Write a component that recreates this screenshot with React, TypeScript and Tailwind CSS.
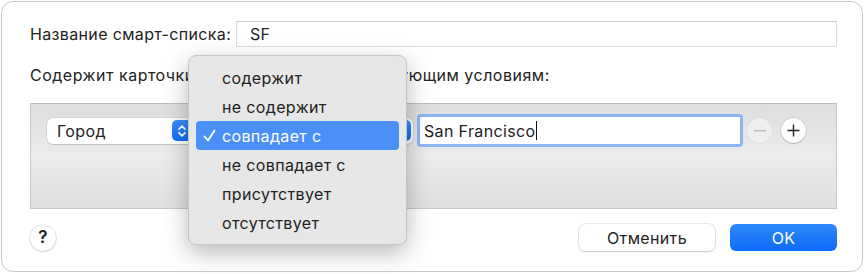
import React from "react";

const OPTIONS = ["содержит", "не содержит", "совпадает с", "не совпадает с", "присутствует", "отсутствует"];
const SELECTED = 2;

function Stepper() {
  return (
    <span className="flex h-[21px] w-[20px] items-center justify-center rounded-[5px] bg-gradient-to-b from-[#3a8dfb] to-[#0b6df5]">
      <svg width="10" height="14" viewBox="0 0 10 14" fill="none" stroke="white" strokeWidth="1.8" strokeLinecap="round" strokeLinejoin="round">
        <path d="M2 5.2 L5 2.2 L8 5.2" />
        <path d="M2 8.8 L5 11.8 L8 8.8" />
      </svg>
    </span>
  );
}

function PopupButton({ label, width }: { label: string; width: string }) {
  return (
    <div className={`flex h-[26px] ${width} items-center justify-between rounded-[6px] bg-white pl-[10px] pr-[2px] shadow-[0_0_0_0.5px_rgba(0,0,0,0.12),0_1px_1px_rgba(0,0,0,0.12)]`}>
      <span className="text-[16px] text-[#222]">{label}</span>
      <Stepper />
    </div>
  );
}

function RoundButton({ children, dim }: { children: React.ReactNode; dim?: boolean }) {
  return (
    <span
      className={`flex h-[25px] w-[25px] items-center justify-center rounded-full ${
        dim
          ? "bg-[#efefef] text-[#bcbcbc] shadow-[0_0_0_0.5px_rgba(0,0,0,0.06)]"
          : "bg-white text-[#222] shadow-[0_0_0_0.5px_rgba(0,0,0,0.15),0_1px_1px_rgba(0,0,0,0.15)]"
      }`}
    >
      {children}
    </span>
  );
}

export default function App() {
  return (
    <div className="h-[274px] w-[865px] bg-white p-[1px] font-['Inter','Noto_Sans',sans-serif] tracking-[0.35px] text-[#222]">
      <div className="relative flex h-[271px] w-[862px] flex-col rounded-[12px] border border-[#c8c8c8] bg-white pl-[28px] pr-[25px] pt-[19px]">
        {/* name row */}
        <div className="flex h-[26px] items-center">
          <span className="w-[206px] text-[16px] leading-none">Название смарт-списка:</span>
          <div className="flex h-[26px] flex-1 items-center border border-[#dedede] border-t-[#cacaca] pl-[13px] text-[16px]">SF</div>
        </div>

        <div className="mt-[18px] text-[16px] leading-[20px] tracking-[0.5px]">Содержит карточки, соответствующие следующим условиям:</div>

        {/* rules box */}
        <div className="mt-[18px] h-[106px] border border-[#c9c9c9] border-t-[#bdbdbd] bg-gradient-to-b from-[#dedede] via-[#ececec] to-[#e0e0e0] pl-[16px] pt-[10px]">
          <div className="flex items-center">
            <PopupButton label="Город" width="w-[147px]" />
            <div className="ml-[9px]">
              <PopupButton label="" width="w-[210px]" />
            </div>
            <div className="ml-[4px] h-[33px] w-[326px] rounded-[4px] bg-[#8bb5f5] p-[3px]">
              <div className="flex h-full items-center bg-white pl-[4px] text-[16px]">
                San Francisco<span className="ml-[1px] h-[19px] w-[1px] bg-[#111]" />
              </div>
            </div>
            <div className="ml-[4px] flex items-center gap-[9px]">
              <RoundButton dim>
                <svg width="12" height="2" viewBox="0 0 12 2"><rect width="12" height="1.4" fill="currentColor" /></svg>
              </RoundButton>
              <RoundButton>
                <svg width="13" height="13" viewBox="0 0 13 13" stroke="currentColor" strokeWidth="1.4"><path d="M6.5 0.5 V12.5 M0.5 6.5 H12.5" /></svg>
              </RoundButton>
            </div>
          </div>
        </div>

        {/* bottom buttons */}
        <div className="mt-[15px] flex items-center">
          <span className="flex h-[26px] w-[26px] items-center justify-center rounded-full bg-white text-[17px] font-semibold shadow-[0_0_0_0.5px_rgba(0,0,0,0.15),0_1px_2px_rgba(0,0,0,0.15)]">?</span>
          <div className="ml-auto flex gap-[15px]">
            <span className="flex h-[27px] w-[136px] items-center justify-center rounded-[6px] bg-white text-[16px] shadow-[0_0_0_0.5px_rgba(0,0,0,0.15),0_1px_2px_rgba(0,0,0,0.15)]">Отменить</span>
            <span className="flex h-[27px] w-[107px] items-center justify-center rounded-[6px] bg-gradient-to-b from-[#2f88fb] to-[#0a6cf6] text-[16px] text-white">OK</span>
          </div>
        </div>

        {/* open popup menu */}
        <div className="absolute left-[186px] top-[53px] w-[219px] rounded-[8px] border border-[#c6c6c6] bg-[#e7e7e7] px-[7px] py-[7px] shadow-[0_8px_24px_rgba(0,0,0,0.28)]">
          {OPTIONS.map((o, i) => (
            <div
              key={o}
              className={`flex h-[29px] items-center rounded-[4px] text-[16px] ${i === SELECTED ? "bg-[#4b8ff8] text-white" : "text-[#222]"}`}
            >
              <span className="flex w-[26px] justify-center">
                {i === SELECTED && (
                  <svg width="13" height="13" viewBox="0 0 13 13" fill="none" stroke="white" strokeWidth="1.8" strokeLinecap="round" strokeLinejoin="round">
                    <path d="M1.5 7.5 L5 11.5 L11.5 1.5" />
                  </svg>
                )}
              </span>
              {o}
            </div>
          ))}
        </div>
      </div>
    </div>
  );
}
